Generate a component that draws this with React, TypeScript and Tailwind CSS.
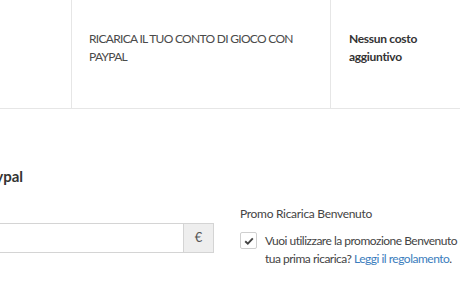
import React from "react";

export default function App() {
  return (
    <div
      className="w-[460px] h-[295px] overflow-hidden bg-white text-[#444]"
      style={{ fontFamily: "Lato, 'Open Sans', sans-serif" }}
    >
      <div className="flex h-[109px] border-b border-[#e6e6e6]">
        <div className="w-[72px] shrink-0 border-r border-[#e6e6e6]" />
        <div className="w-[259px] shrink-0 border-r border-[#e6e6e6] pl-[17px] pr-[24px] pt-[30px] text-[12px] tracking-[-0.7px] leading-[18px] text-[#4a4a4a]">
          RICARICA IL TUO CONTO DI GIOCO CON PAYPAL
        </div>
        <div className="flex-1 pl-[18px] pt-[30px] text-[12px] tracking-[-0.3px] leading-[18px] font-bold text-[#333]">
          Nessun costo
          <br />
          aggiuntivo
        </div>
      </div>
      <div className="flex">
        <div className="w-[214px] shrink-0">
          <div className="mt-[57px] -ml-[100px] text-[15px] font-bold leading-[20px] text-[#333] text-right w-[123px] whitespace-nowrap">
            con Paypal
          </div>
          <div className="mt-[37px] flex h-[30px] border border-[#d4d4d4] border-l-0">
            <div className="flex-1 bg-white" />
            <div className="w-[30px] bg-[#eeeeee] border-l border-[#d4d4d4] flex items-center justify-center text-[13px] text-[#555]">
              €
            </div>
          </div>
        </div>
        <div className="ml-[26px] pt-[96px] flex-1 min-w-0">
          <div className="text-[12px] tracking-[-0.3px] leading-[18px] text-[#444]">Promo Ricarica Benvenuto</div>
          <div className="mt-[9px] flex">
            <div className="w-[17px] h-[17px] shrink-0 border border-[#cfcfcf] rounded-[2px] flex items-center justify-center bg-white">
              <svg width="10" height="8" viewBox="0 0 10 8">
                <path d="M1.2 4.2 L3.8 6.6 L8.8 1.4" fill="none" stroke="#444" strokeWidth="1.9" />
              </svg>
            </div>
            <div className="ml-[8px] text-[12px] tracking-[-0.5px] leading-[18px] text-[#444] whitespace-nowrap">
              Vuoi utilizzare la promozione Benvenuto per la
              <br />
              tua prima ricarica? <span className="text-[#3b7dbd]">Leggi il regolamento</span>.
            </div>
          </div>
        </div>
      </div>
    </div>
  );
}
